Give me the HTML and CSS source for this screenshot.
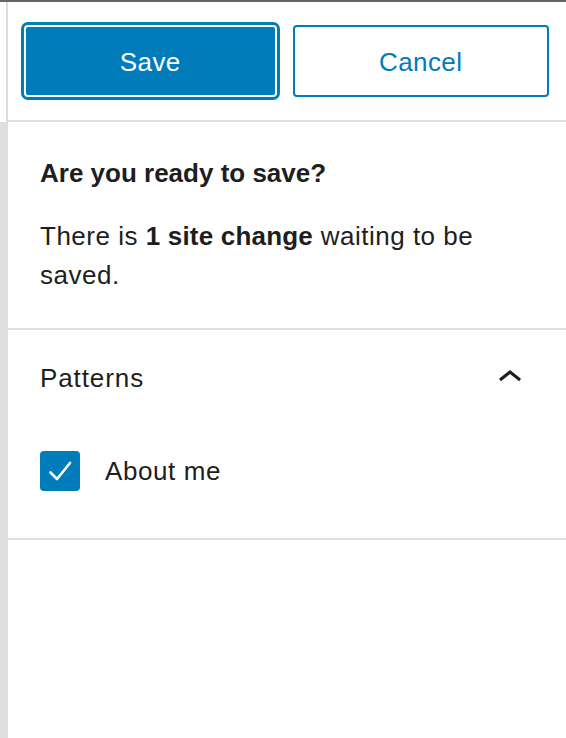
FILE: index.html
```html
<!DOCTYPE html>
<html lang="en">
<head>
<meta charset="utf-8">
<title>Save changes</title>
<link rel="stylesheet" href="styles.css">
</head>
<body>
<div class="editor">
  <div class="rail rail-top"></div>
  <header class="actions">
    <button class="btn btn-primary" type="button">Save</button>
    <button class="btn btn-secondary" type="button">Cancel</button>
  </header>
  <div class="rail rail-fill"></div>
  <main class="panel">
    <section class="panel-section summary">
      <h2 class="summary-title">Are you ready to save?</h2>
      <p class="summary-text">There is <strong>1 site change</strong> waiting to be saved.</p>
    </section>
    <section class="panel-section group">
      <div class="group-toggle">
        <span class="group-title">Patterns</span>
        <svg class="chevron" viewBox="0 0 24 24" width="48" height="48" aria-hidden="true"><path d="M6.5 12.4L12 8l5.5 4.4-.9 1.2L12 10l-4.5 3.6-1-1.2z"/></svg>
      </div>
      <div class="group-body">
        <label class="check-row">
          <span class="check-box"><svg viewBox="0 0 40 40" width="40" height="40" aria-hidden="true"><polyline points="10.5,21.5 17,28 30,12" /></svg></span>
          <span class="check-label">About me</span>
        </label>
      </div>
    </section>
  </main>
</div>
</body>
</html>
```

FILE: styles.css
```css
* { box-sizing: border-box; }

html, body {
  margin: 0;
  padding: 0;
  background: #fff;
}

body {
  font-family: "Liberation Sans", Arial, sans-serif;
  color: #1e1e1e;
  font-size: 26px;
  line-height: 1.5;
}

.editor {
  display: grid;
  grid-template-columns: 8px 1fr;
  grid-template-rows: auto 1fr;
  min-height: 100vh;
  border-top: 2px solid #666;
}

.rail-top {
  border-right: 2px solid #dddddd;
  background: #fff;
}

.rail-fill {
  background: #dedede;
}

.actions {
  display: flex;
  gap: 16px;
  padding: 23px 17px 23px 16px;
  border-bottom: 2px solid #e0e0e0;
}

.btn {
  flex: 1;
  height: 72px;
  padding: 2px 0 0;
  border-radius: 4px;
  font-family: inherit;
  font-size: 26px;
  line-height: 1;
  letter-spacing: 0.4px;
  cursor: pointer;
}

.btn-primary {
  background: #007cba;
  color: #fff;
  border: 0;
  box-shadow: inset 0 0 0 2px #fff, 0 0 0 3px #007cba;
}

.btn-secondary {
  background: #fff;
  color: #007cba;
  border: 2px solid #007cba;
}

.panel {
  display: flex;
  flex-direction: column;
}

.panel-section {
  border-bottom: 2px solid #e0e0e0;
}

.summary {
  padding: 32px 32px 33px;
}

.summary-title {
  margin: 0;
  font-size: 26px;
  font-weight: 700;
  line-height: 39px;
}

.summary-text {
  margin: 24px 0 0;
  line-height: 39px;
  letter-spacing: 0.5px;
}

.summary-text strong {
  letter-spacing: 0.2px;
}

.group {
  padding: 24px 32px 47px;
}

.group-toggle {
  display: flex;
  align-items: center;
  justify-content: space-between;
  height: 48px;
}

.group-title {
  font-weight: 400;
  letter-spacing: 0.9px;
}

.chevron {
  display: block;
  fill: #1e1e1e;
}

.group-body {
  padding-top: 49px;
}

.check-row {
  display: flex;
  align-items: center;
  gap: 25px;
  height: 40px;
}

.check-box {
  display: block;
  width: 40px;
  height: 40px;
  border-radius: 4px;
  background: #007cba;
}

.check-box svg {
  display: block;
}

.check-box polyline {
  fill: none;
  stroke: #fff;
  stroke-width: 2.6;
  stroke-linecap: round;
  stroke-linejoin: round;
}

.check-label {
  line-height: 39px;
  letter-spacing: 0.6px;
}
```
